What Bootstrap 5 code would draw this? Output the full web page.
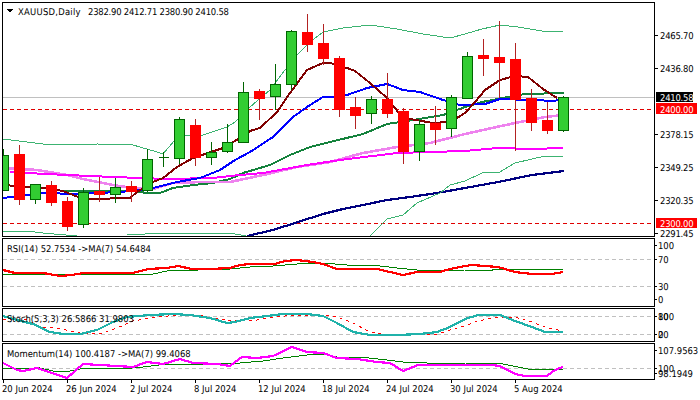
<!DOCTYPE html>
<html lang="en">
<head>
<meta charset="utf-8">
<title>XAUUSD,Daily</title>
<link href="https://cdn.jsdelivr.net/npm/bootstrap@5.3.0/dist/css/bootstrap.min.css" rel="stylesheet">
<style>
body{background:#fff;margin:0;overflow:hidden}
.term{width:700px;height:400px}
.term svg{display:block;overflow:visible;shape-rendering:crispEdges;flex:none}
.term text{font-family:"DejaVu Sans Condensed","Liberation Sans",sans-serif;font-size:9.4px;fill:#000;text-rendering:geometricPrecision}
.term text.inv{fill:#fff}
.term text.num{letter-spacing:-.22px}
.term text.sym{letter-spacing:.25px}
.frame{fill:none;stroke:#000;stroke-width:1}
.ln{fill:none}
.grid-d{stroke:#c0c0c0;stroke-width:1;stroke-dasharray:4 3;fill:none}
.lvl{stroke:#e00000;stroke-width:1;stroke-dasharray:4 3;fill:none}
.cur{stroke:#c0c0c0;stroke-width:1;fill:none}
.tk{stroke:#000;stroke-width:1;fill:none}
.bb{stroke:#3cb371;stroke-width:1}
.mid{stroke:#14823c;stroke-width:2}
.vio{stroke:#ee82ee;stroke-width:2.6}
.mag{stroke:#ff00ff;stroke-width:2}
.blu{stroke:#0000ff;stroke-width:2}
.mar{stroke:#800000;stroke-width:2}
.nav-l{stroke:#000080;stroke-width:2.2}
.b-up{fill:#32cd32;stroke:#006400;stroke-width:1}
.b-dn{fill:#ff0000;stroke:#ff0000;stroke-width:1}
.w-up{stroke:#006400;stroke-width:1;fill:none}
.w-dn{stroke:#b22222;stroke-width:1;fill:none}
.sig{stroke:#008000;stroke-width:1}
.rsi-l{stroke:#ff0000;stroke-width:2.2}
.teal{stroke:#20b2aa;stroke-width:2.2}
.dot{stroke:#ff0000;stroke-width:1;stroke-dasharray:3 4}
.mom{stroke:#ff00ff;stroke-width:2.2}
</style>
</head>
<body>
<div class="term d-flex flex-column">

<svg width="700" height="237" viewBox="0 0 700 237">
<path class="cur" d="M3 97.500H654"/>
<path class="lvl" d="M3 109.500H654M3 223.500H654"/>
<path class="ln nav-l" d="M247 236L273 230 295 223 323 214 343 209 363 205 387 200 410 197 437 193 465 188 498 182 532 175 564 171"/>
<path class="ln bb" d="M3 139L43 144 67 145 97 144 133 145 157 152 163 154 175 140 178 136 203 135 227 127 235 122 250 107 270 90 285 70 297 55 310 42 323 32 343 28 370 25 397 29 423 34 450 38 465 34 482 29 500 25 518 27 542 31 563 31"/>
<path class="ln bb" d="M3 231L27 231 43 233 77 236M127 235L163 233 230 233 246 236M370 236L387 219 403 215 417 203 440 193 450 185 465 181 482 173 500 172 515 163 532 159 545 156 563 156"/>
<path class="ln mid" d="M3 185L43 188 63 191 100 191 133 191 147 193 160 193 173 188 193 185 213 183 230 179 243 173 270 165 290 155 310 147 330 142 363 134 387 124 413 120 443 115 465 107 482 102 508 97 525 94 564 93"/>
<path class="ln vio" d="M3 168L37 170 67 175 83 179 113 185 133 188 153 189 173 183 200 182 230 182 263 175 297 167 330 162 363 153 397 147 430 143 465 134 483 130 515 123 545 117 563 115"/>
<path class="ln mag" d="M10 172L27 173 67 175 113 177 167 179 213 178 230 176 263 173 307 165 340 160 397 153 430 152 465 151 498 148 532 149 563 148"/>
<path class="ln blu" d="M3 198L20 196 43 193 77 194 100 193 133 191 153 188 177 182 200 178 220 170 235 160 250 152 273 137 293 117 307 107 323 97 333 97 347 95 367 88 387 84 403 90 420 92 443 100 460 105 485 104 500 99 532 100 555 101 563 98"/>
<path class="ln mar" d="M3 185L43 188 63 191 78 197 90 199 130 198 137 192 153 182 163 178 177 167 193 158 223 148 235 141 250 131 260 128 277 112 290 93 307 70 323 63 330 63 347 68 355 71 370 83 387 98 398 112 410 119 433 123 447 122 457 118 465 113 475 102 485 90 500 80 515 76 528 77 543 89 557 98"/>
<path class="w-dn" d="M19.500 145V205M51.500 181V206M67.500 197V231M99.500 177V202M131.500 181V202M195.500 119V166M259.500 89V120M307.500 14V52M323.500 24V65M339.500 56V117M355.500 97V129M387.500 73V118M403.500 108V164M435.500 106V145M483.500 39V76M499.500 21V98M515.500 43V151M531.500 89V131M547.500 102V134"/>
<path class="w-up" d="M3.500 149V190M35.500 184V204M83.500 188V228M115.500 178V203M147.500 149V192M163.500 152V167M158.500 157.500h10M179.500 117V164M211.500 142V165M227.500 124V153M243.500 82V142M275.500 64V110M291.500 30V90M371.500 96V124M419.500 120V161M451.500 95V137M467.500 52V98M563.500 96V132"/>
<path class="b-dn" d="M14.500 154h10v45h-10zM46.500 185h10v17h-10zM62.500 201h10v25h-10zM94.500 191h10v3h-10zM126.500 186h10v5h-10zM190.500 125h10v32h-10zM254.500 91h10v7h-10zM302.500 32h10v12h-10zM318.500 43h10v15h-10zM334.500 58h10v51h-10zM350.500 107h10v8h-10zM382.500 99h10v14h-10zM398.500 111h10v40h-10zM430.500 123h10v6h-10zM478.500 55h10v3h-10zM494.500 57h10v5h-10zM510.500 59h10v40h-10zM526.500 98h10v24h-10zM542.500 120h10v10h-10z"/>
<path class="b-up" d="M2.500 155h5.500v35h-5.500zM30.500 184h10v15h-10zM78.500 192h10v32h-10zM110.500 187h10v7h-10zM142.500 159h10v31h-10zM174.500 119h10v39h-10zM206.500 152h10v5h-10zM222.500 142h10v9h-10zM238.500 92h10v50h-10zM270.500 84h10v12h-10zM286.500 31h10v53h-10zM366.500 99h10v14h-10zM414.500 124h10v27h-10zM446.500 97h10v31h-10zM462.500 56h10v42h-10zM558.500 97h10v33h-10z"/>
<path d="M6 9h7l-3.500 3.500z" fill="#000"/>
<rect class="frame" x="2.500" y="2.500" width="652" height="234"/>
<text class="sym" x="18" y="14.500">XAUUSD,Daily</text>
<text class="num" x="88" y="14.500">2382.90 2412.71 2380.90 2410.58</text>
<path class="tk" d="M654 35.500h4M654 68.500h4M654 134.500h4M654 167.500h4M654 200.500h4M654 233.500h4"/>
<text class="num" x="660" y="39">2465.70</text>
<text class="num" x="660" y="72">2436.80</text>
<rect x="656" y="92" width="37" height="10" fill="#000"/>
<text class="inv num" x="660" y="101">2410.58</text>
<rect x="656" y="103" width="41" height="11" fill="#ff0000"/>
<text class="inv num" x="660" y="112.500">2400.00</text>
<text class="num" x="660" y="138">2378.15</text>
<text class="num" x="660" y="171">2349.25</text>
<text class="num" x="660" y="204">2320.35</text>
<rect x="656" y="218" width="41" height="10" fill="#ff0000"/>
<text class="inv num" x="660" y="227">2300.00</text>
<text class="num" x="660" y="237">2291.45</text>
</svg>

<svg width="700" height="70" viewBox="0 237 700 70">
<path class="grid-d" d="M3 259.500H654M3 286.500H654"/>
<path class="ln sig" d="M3 274L153 274 167 271 230 269 250 267 273 266 297 264 323 263 347 265 380 266 397 268 427 271 465 270 492 270 492 269 563 269"/>
<path class="ln rsi-l" d="M3 270L15 273 43 273 60 276 72 275 83 273 110 273 133 273 148 269 167 268 178 266 192 269 210 269 230 268 240 265 250 264 275 264 285 261 297 260 313 262 323 264 337 269 377 269 390 272 403 275 417 272 440 272 450 269 465 266 472 265 485 266 498 267 515 272 532 274 552 274 563 272"/>
<rect class="frame" x="2.500" y="238.500" width="652" height="68"/>
<text x="7" y="251.500">RSI(14) 52.7534  -&gt;MA(7) 54.6484</text>
<path class="tk" d="M654 245.500h3M654 259.500h3M654 286.500h3M654 299.500h3"/>
<text x="658" y="249">100</text>
<text x="658" y="263">70</text>
<text x="658" y="290">30</text>
<text x="658" y="303">0</text>
</svg>

<svg width="700" height="35" viewBox="0 307 700 35">
<path class="grid-d" d="M3 316.500H654M3 334.500H654"/>
<path class="ln dot" d="M3 319L27 320 40 327 57 328 80 333 103 333 117 328 133 321 157 317 180 315 203 316 230 321 257 320 273 317 297 315 323 315 337 317 353 323 370 332 383 334 420 335 437 334 457 328 465 326 478 321 498 317 515 317 532 322 548 328 563 331"/>
<path class="ln teal" d="M3 316L17 320 33 324 50 332 63 334 80 334 97 330 113 322 127 317 150 315 173 314 190 315 210 318 227 323 235 322 250 318 267 316 283 314 307 314 323 316 337 323 353 332 370 335 397 335 420 334 437 332 450 327 465 319 478 315 500 315 515 321 532 327 545 332 563 332"/>
<rect class="frame" x="2.500" y="308.500" width="652" height="33"/>
<text x="7" y="321.500">Stoch(5,3,3) 26.5866 31.9803</text>
<path class="tk" d="M654 316.500h3M654 334.500h3"/>
<text x="658" y="320">80</text>
<text x="658" y="320">100</text>
<text x="658" y="338">20</text>
<text x="658" y="338">0</text>
</svg>

<svg width="700" height="38" viewBox="0 342 700 38">
<path class="grid-d" d="M3 368.500H654"/>
<path class="ln sig" d="M3 369L40 368 53 371 70 371 80 369 133 368 143 367 167 364 217 364 240 363 263 361 283 358 307 355 323 354 337 357 360 357 387 360 403 362 427 363 465 363 503 364 528 369 542 370 563 369"/>
<path class="ln mom" d="M3 363L17 370 23 371 37 368 67 378 83 364 100 365 133 367 147 362 163 364 180 359 193 363 217 364 230 366 242 357 257 358 273 356 292 347 307 352 323 353 337 358 357 359 377 362 390 363 403 371 418 365 443 365 492 365 500 366 515 374 525 376 547 376 555 370 563 367"/>
<rect class="frame" x="2.500" y="343.500" width="652" height="36"/>
<text x="7" y="356.500">Momentum(14) 100.4187  -&gt;MA(7) 99.4068</text>
<path class="tk" d="M654 350.500h3M654 368.500h3M654 373.500h3"/>
<text x="658" y="354">107.9563</text>
<text x="658" y="372">100</text>
<text x="658" y="377">98.1949</text>
</svg>

<svg width="700" height="20" viewBox="0 380 700 20">
<path class="tk" d="M3.500 380v3M67.500 380v3M131.500 380v3M195.500 380v3M259.500 380v3M323.500 380v3M387.500 380v3M451.500 380v3M515.500 380v3"/>
<text x="2" y="392">20 Jun 2024</text>
<text x="66" y="392">26 Jun 2024</text>
<text x="130" y="392">2 Jul 2024</text>
<text x="194" y="392">8 Jul 2024</text>
<text x="258" y="392">12 Jul 2024</text>
<text x="322" y="392">18 Jul 2024</text>
<text x="386" y="392">24 Jul 2024</text>
<text x="450" y="392">30 Jul 2024</text>
<text x="514" y="392">5 Aug 2024</text>
</svg>

</div>
<script src="https://cdn.jsdelivr.net/npm/bootstrap@5.3.0/dist/js/bootstrap.bundle.min.js"></script>
</body>
</html>
